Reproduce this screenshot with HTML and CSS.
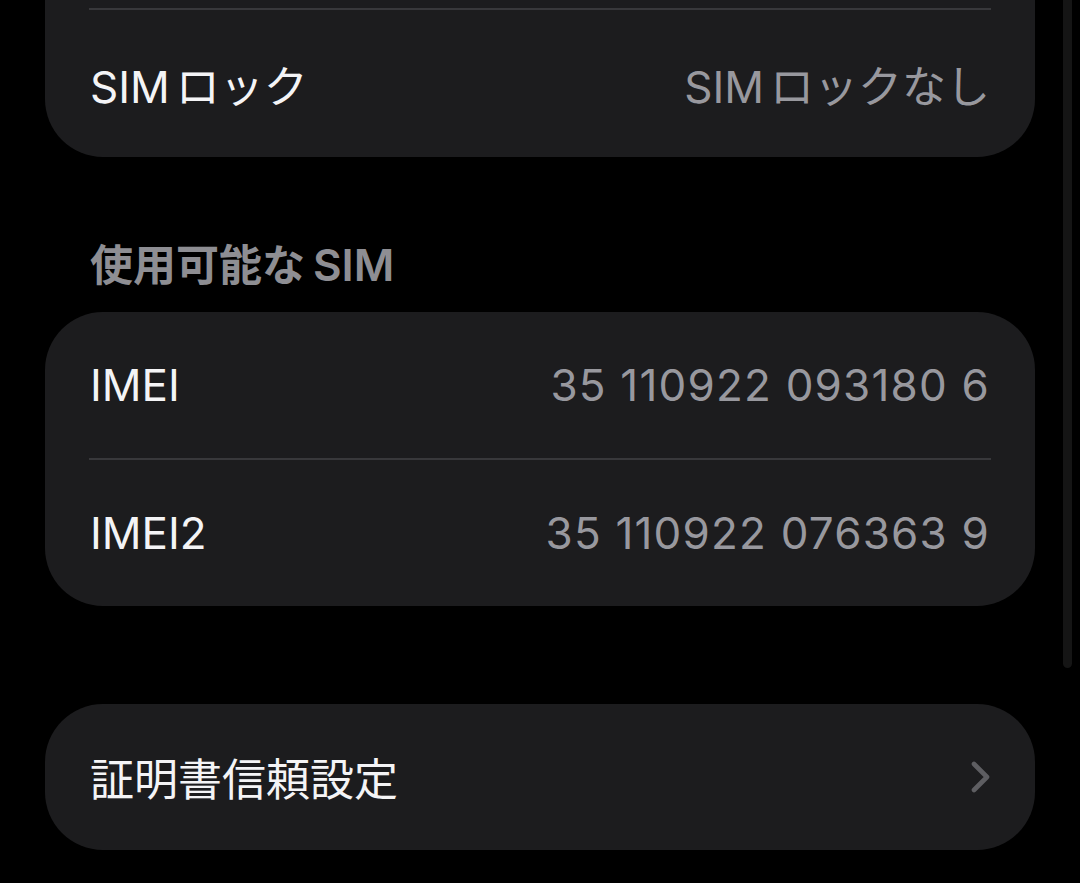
FILE: index.html
```html
<!DOCTYPE html>
<html lang="ja">
<head>
<meta charset="utf-8">
<link rel="stylesheet" href="styles.css">
</head>
<body>
<div class="page">
  <div class="card card-top">
    <div class="top-spacer"></div>
    <div class="divider"></div>
    <div class="row row-first">
      <span class="label"><span class="latin">SIM</span>ロック</span>
      <span class="value"><span class="latin">SIM</span>ロックなし</span>
    </div>
  </div>

  <div class="section-header">使用可能な<span class="latin-h">SIM</span></div>

  <div class="card">
    <div class="row">
      <span class="label">IMEI</span>
      <span class="value digits">35 110922 093180 6</span>
    </div>
    <div class="divider"></div>
    <div class="row">
      <span class="label">IMEI2</span>
      <span class="value digits">35 110922 076363 9</span>
    </div>
  </div>

  <div class="card card-link">
    <div class="row">
      <span class="label">証明書信頼設定</span>
      <svg class="chevron" width="22" height="34" viewBox="0 0 22 34" aria-hidden="true">
        <path d="M4 4 L17 17 L4 30" fill="none" stroke="#5e5e62" stroke-width="4.6" stroke-linecap="round" stroke-linejoin="round"/>
      </svg>
    </div>
  </div>
</div>
<div class="scrollbar"></div>
</body>
</html>
```

FILE: styles.css
```css
html, body {
  margin: 0;
  padding: 0;
  background: #000;
}

body {
  width: 1080px;
  height: 883px;
  overflow: hidden;
  position: relative;
  font-family: Inter, "Noto Sans CJK JP", "Noto Sans", sans-serif;
  -webkit-font-smoothing: antialiased;
}

.page {
  display: flex;
  flex-direction: column;
  padding-left: 45px;
  width: 990px;
}

.card {
  background: #1c1c1e;
  border-radius: 58px;
  display: flex;
  flex-direction: column;
  overflow: hidden;
}

.card-top {
  border-radius: 0 0 58px 58px;
}

.top-spacer {
  height: 8px;
}

.divider {
  height: 2px;
  margin: 0 44px;
  background: #38383b;
}

.row {
  height: 146px;
  padding: 0 45px;
  display: flex;
  align-items: center;
  justify-content: space-between;
}

.row-first {
  height: 147px;
}

.label {
  color: #f4f4f6;
  font-size: 44px;
  font-weight: 400;
}

.value {
  color: #98989e;
  font-size: 44px;
  font-weight: 400;
}

.digits {
  letter-spacing: 1.2px;
}

.latin {
  margin-right: 6px;
}

.section-header {
  height: 155px;
  box-sizing: border-box;
  display: flex;
  align-items: flex-end;
  padding: 0 45px 22px;
  color: #8e8e93;
  font-size: 43px;
  font-weight: 600;
  line-height: 50px;
}

.latin-h {
  margin-left: 8px;
  font-size: 44px;
}

.card-link {
  margin-top: 98px;
}

.chevron {
  display: block;
  margin-right: -2px;
}

.scrollbar {
  position: absolute;
  left: 1063px;
  top: 0;
  width: 9px;
  height: 668px;
  border-radius: 0 0 5px 5px;
  background: #151515;
}
```
